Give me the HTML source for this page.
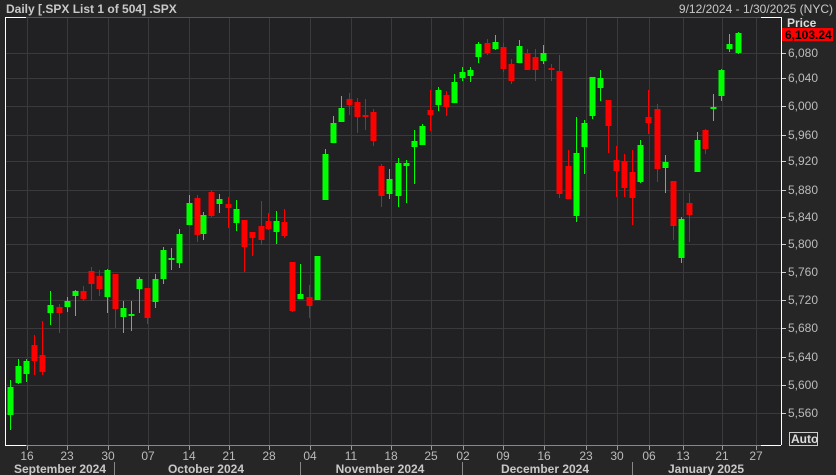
<!DOCTYPE html>
<html><head><meta charset="utf-8"><style>
body{margin:0;background:#262626;width:836px;height:475px;overflow:hidden;font-family:"Liberation Sans",sans-serif}
svg{display:block}
</style></head><body>
<svg id="s" width="836" height="475" xmlns="http://www.w3.org/2000/svg" font-family="Liberation Sans, sans-serif">
<rect width="836" height="475" fill="#262626"/>
<rect x="5" y="17" width="776" height="428" fill="#212123"/>
<g id="grid" stroke="#3a3a3a" stroke-width="1"></g>
<g id="c"></g>
<line x1="5.5" y1="17" x2="5.5" y2="445" stroke="#fff"/>
<line x1="5" y1="17.5" x2="26" y2="17.5" stroke="#fff"/>
<line x1="26" y1="17.5" x2="761" y2="17.5" stroke="#555"/>
<line x1="761" y1="17.5" x2="781" y2="17.5" stroke="#fff"/>
<line x1="781.5" y1="17" x2="781.5" y2="445" stroke="#fff"/>
<line x1="5" y1="445.5" x2="26" y2="445.5" stroke="#fff"/>
<line x1="26" y1="445.5" x2="761" y2="445.5" stroke="#888"/>
<line x1="761" y1="445.5" x2="781" y2="445.5" stroke="#fff"/>
<text x="6" y="13" fill="#c8c8c8" font-size="12" font-weight="bold">Daily [.SPX List 1 of 504] .SPX</text>
<text x="833" y="13" fill="#c8c8c8" font-size="12" text-anchor="end">9/12/2024 - 1/30/2025 (NYC)</text>
<text x="787" y="27" fill="#ddd" font-size="12" font-weight="bold">Price</text>
<text x="787" y="40" fill="#ddd" font-size="12" font-weight="bold">USD</text>
<rect x="782" y="28" width="51" height="13" fill="#f00"/>
<text x="785" y="39" fill="#000" font-size="12" font-weight="bold">6,103.24</text>
<g id="py" fill="#bbb" font-size="12"></g>
<rect x="789.5" y="432.5" width="28" height="13" fill="none" stroke="#ccc"/>
<text x="791" y="443" fill="#ddd" font-size="12" font-weight="bold">Auto</text>
<g id="tx" fill="#bbb" font-size="12" text-anchor="middle"></g>
<g fill="#c8c8c8" font-size="12" font-weight="bold" text-anchor="middle">
<text x="60" y="473">September 2024</text>
<text x="206" y="473">October 2024</text>
<text x="380" y="473">November 2024</text>
<text x="545" y="473">December 2024</text>
<text x="706" y="473">January 2025</text>
</g>
<g stroke="#888"><line x1="114.5" y1="462" x2="114.5" y2="475"/><line x1="300.5" y1="462" x2="300.5" y2="475"/><line x1="462.5" y1="462" x2="462.5" y2="475"/><line x1="632.5" y1="462" x2="632.5" y2="475"/></g>
</svg>
<script>
var NS="http://www.w3.org/2000/svg";
function el(p,t,a,txt){var e=document.createElementNS(NS,t);for(var k in a)e.setAttribute(k,a[k]);if(txt)e.textContent=txt;document.getElementById(p).appendChild(e);}
var xs=[27,67,108,148,189,229,269,310,351,391,431,463,503,544,586,617,649,683,722,756];
var xl=["16","23","30","07","14","21","28","04","11","18","25","02","09","16","23","30","06","13","21","27"];
xs.forEach(function(x,i){el("grid","line",{x1:x+.5,y1:18,x2:x+.5,y2:445});el("grid","line",{x1:x+.5,y1:446,x2:x+.5,y2:450,stroke:"#999"});el("tx","text",{x:x,y:460},xl[i]);});
[[100,"6,080",53],[0,"6,040",78],[0,"6,000",106],[0,"5,960",135],[0,"5,920",161],[0,"5,880",190],[0,"5,840",217],[0,"5,800",244],[0,"5,760",272],[0,"5,720",300],[0,"5,680",328],[0,"5,640",357],[0,"5,600",385],[0,"5,560",413]].forEach(function(r){var y=r[2];el("grid","line",{x1:5,y1:y+.5,x2:781,y2:y+.5});el("grid","line",{x1:782,y1:y+.5,x2:786,y2:y+.5,stroke:"#ccc"});el("py","text",{x:788,y:y+4},r[1]);});
var G="#00ff00",R="#ff0000";
var c=[[9.5,"g",387,415,380,430],[17.5,"g",366,383,359,384],[25.5,"g",361,374,359,382],[33.5,"r",345,361,335,375],[41.5,"r",355,372,321,375],[49.5,"g",305,313,291,325],[58.5,"r",307,313,304,333],[66.5,"g",301,307,297,312],[74.5,"g",291,296,290,316],[82.5,"r",291,299,286,301],[90.5,"r",271,284,267,301],[98.5,"r",276,289,270,296],[106.5,"g",270,297,269,313],[114.5,"r",274,309,274,328],[122.5,"g",308,317,301,333],[130.5,"g",314,316,301,331],[138.5,"g",279,289,277,313],[146.5,"r",288,318,288,324],[154.5,"g",279,302,274,308],[162.5,"g",250,279,247,284],[170.5,"g",258,260,248,270],[178.5,"g",234,263,229,268],[188.5,"g",203,225,195,225],[196.5,"r",198,235,195,242],[203,"g",215,234,212,240],[211,"r",192,216,190,217],[219,"g",199,204,194,213],[228,"r",204,208,197,228],[236,"g",209,223,200,231],[244,"r",220,247,220,272],[252,"r",232,238,232,256],[261,"r",226,240,201,245],[268,"r",221,229,213,230],[276,"g",221,232,211,244],[284,"r",222,236,209,238],[292,"r",262,311,262,312],[300,"g",294,299,264,299],[309,"r",297,306,285,318],[317,"g",256,300,256,300],[325,"g",154,200,149,200],[333,"g",123,143,116,143],[341,"g",108,122,96,122],[349,"r",99,105,93,115],[357,"r",102,117,98,133],[365,"r",115,116,99,130],[373,"r",112,141,109,146],[381,"r",166,196,164,207],[389,"g",179,194,169,199],[398,"g",163,196,158,207],[406,"g",163,166,160,203],[414,"g",141,147,130,184],[422,"g",126,145,124,145],[430,"r",110,115,90,131],[438,"g",90,105,87,111],[446,"r",95,107,91,116],[454,"g",82,103,74,103],[462,"g",72,78,67,81],[470,"g",70,76,67,82],[478,"g",44,57,42,63],[487,"r",43,53,39,55],[495,"g",42,49,35,50],[503,"r",47,69,43,72],[511,"r",64,81,59,84],[519,"g",46,63,40,63],[527,"r",53,70,49,70],[535,"r",57,70,49,81],[543,"g",53,61,45,64],[551,"r",68,70,64,81],[559,"r",71,194,55,198],[568,"r",166,199,150,199],[576,"g",153,216,117,222],[584,"g",123,147,120,174],[592,"g",77,116,77,119],[600,"g",78,88,70,101],[608,"r",100,126,100,153],[616,"r",160,171,146,197],[624,"r",161,188,154,197],[632,"r",172,198,150,225],[640,"g",145,182,140,183],[648,"r",117,123,90,134],[657,"r",109,169,104,182],[665,"g",162,168,155,193],[673,"r",181,226,181,240],[681,"g",219,258,217,263],[689,"r",203,215,193,242],[697,"g",140,172,132,172],[705,"r",130,149,129,154],[713,"g",107,109,94,121],[721,"g",70,96,69,101],[729,"g",44,49,34,52],[738,"g",33,53,32,54]];
c.forEach(function(k){var col=k[1]=="g"?G:R,x=Math.round(k[0]);el("c","rect",{x:x,y:k[4],width:1,height:k[5]-k[4],fill:col});var h=Math.max(2,k[3]-k[2]);el("c","rect",{x:x-2.5,y:k[2],width:6,height:h,fill:col});});
</script>
</body></html>
